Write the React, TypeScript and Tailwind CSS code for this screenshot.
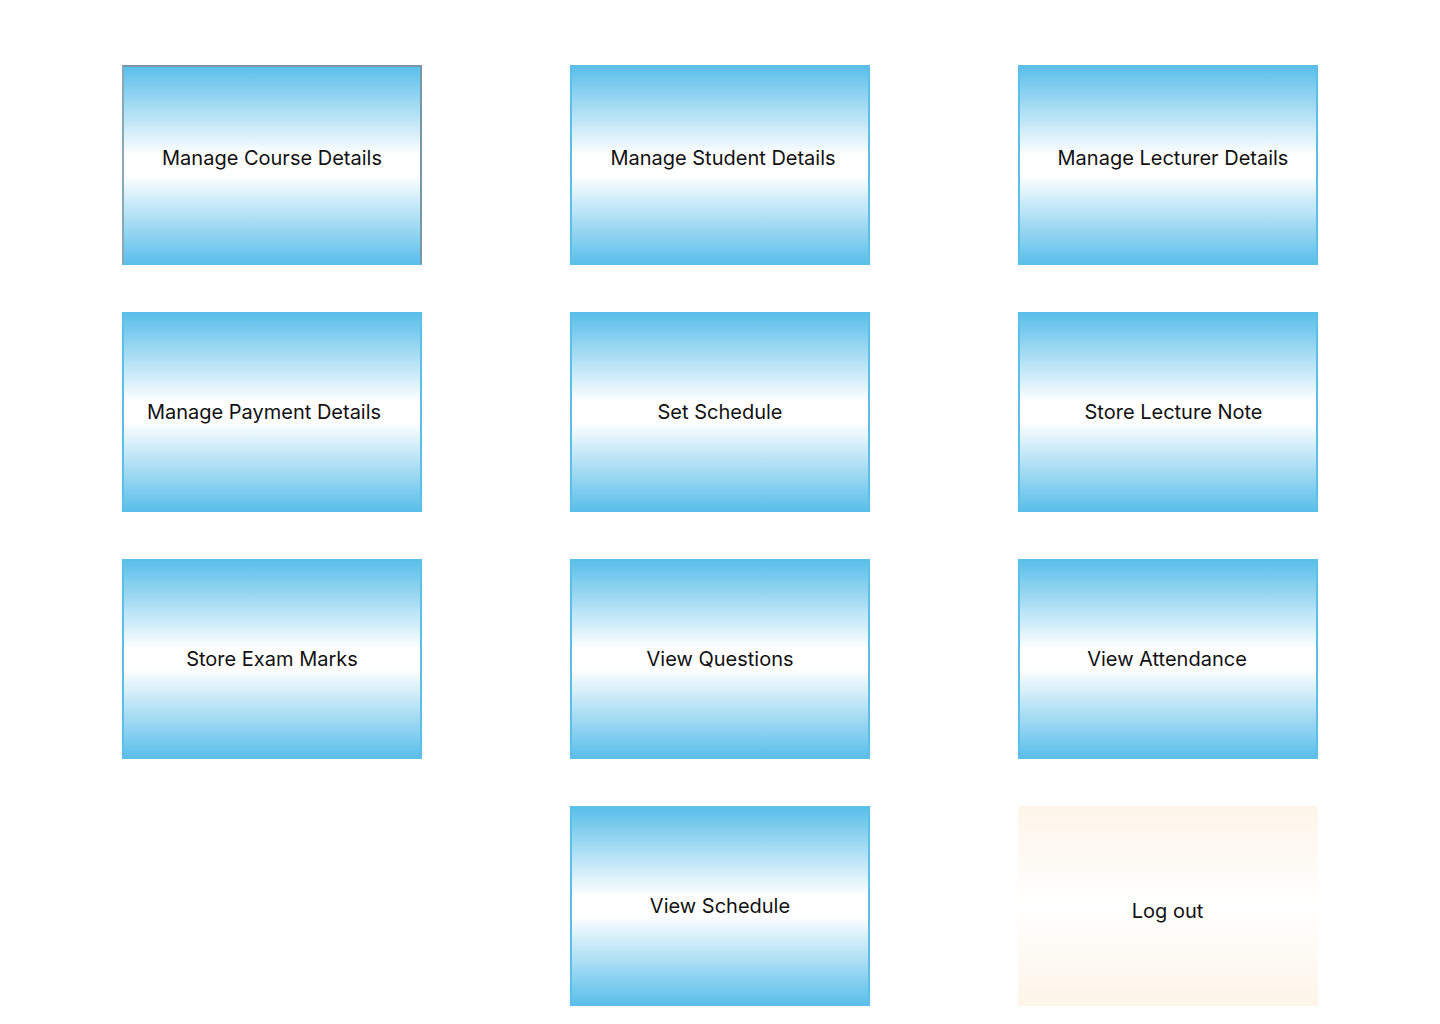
const cards = [
  { label: 'Manage Course Details', first: true, text: 'pb-[14px]' },
  { label: 'Manage Student Details', text: 'pb-[14px] pl-[6px]' },
  { label: 'Manage Lecturer Details', text: 'pb-[14px] pl-[10px]' },
  { label: 'Manage Payment Details', text: 'pr-[16px]' },
  { label: 'Set Schedule', text: '' },
  { label: 'Store Lecture Note', text: 'pl-[11px]' },
  { label: 'Store Exam Marks', text: '' },
  { label: 'View Questions', text: '' },
  { label: 'View Attendance', text: 'pr-[2px]' },
];

const Card = ({
  label,
  first,
  text,
}: {
  label: string;
  first?: boolean;
  text: string;
}) => (
  <button
    className={`w-[300px] h-[200px] flex items-center justify-center border-2 bg-[linear-gradient(180deg,#5bbfea_0%,#ffffff_45%,#ffffff_55%,#5bbfea_100%)] ${
      first
        ? 'border-[#5bbfea] border-t-[#7697a6] border-r-[#7697a6] [border-left-color:#8aa9b8]'
        : 'border-[#5bbfea]'
    }`}
  >
    <span className={`text-[20px] text-[#111] ${text}`}>{label}</span>
  </button>
);

export default function App() {
  return (
    <div
      className="min-h-[1024px] w-[1440px] bg-white pt-[65px] pl-[122px]"
      style={{ fontFamily: 'Inter, "Noto Sans", sans-serif' }}
    >
      <div className="grid grid-cols-[300px_300px_300px] gap-x-[148px] gap-y-[47px]">
        {cards.map((c) => (
          <Card key={c.label} {...c} />
        ))}
        <div />
        <Card label="View Schedule" text="" />
        <button className="w-[300px] h-[200px] flex items-center justify-center bg-[linear-gradient(180deg,#fdf5e9_0%,#ffffff_50%,#fdf5e9_100%)]">
          <span className="text-[20px] text-[#111] pt-[10px] pr-[1px]">Log out</span>
        </button>
      </div>
    </div>
  );
}
